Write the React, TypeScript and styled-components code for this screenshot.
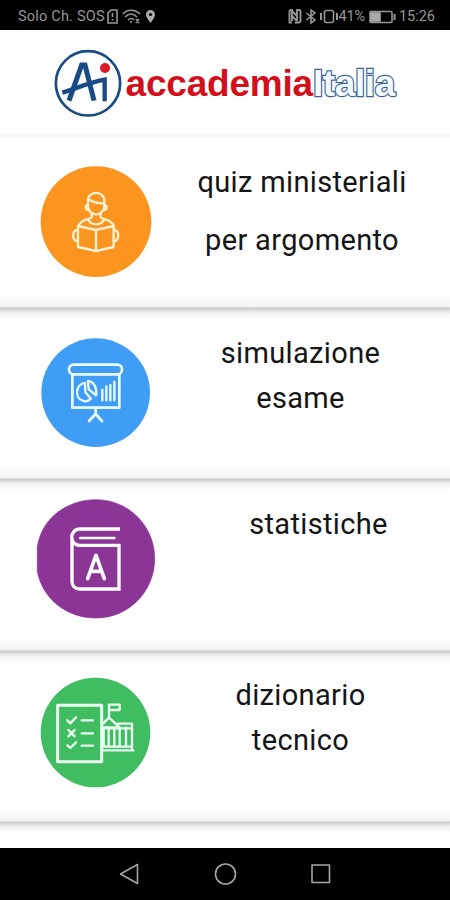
import React from 'react';
import styled, { createGlobalStyle } from 'styled-components';

const Global = createGlobalStyle`
  body { margin: 0; background: #fff; }
  * { box-sizing: border-box; }
`;

const Screen = styled.div`
  width: 450px;
  height: 900px;
  display: flex;
  flex-direction: column;
  overflow: hidden;
  background: #fefefe;
  font-family: Roboto, sans-serif;
  color: #151515;
`;

const StatusBar = styled.div`
  height: 30px;
  flex: none;
  display: flex;
  align-items: center;
  justify-content: space-between;
  padding: 3px 15px 0 18px;
  background: #000;
  color: #969696;
  font-size: 14.5px;
  line-height: 27px;
`;

const StatusGroup = styled.div`
  display: flex;
  align-items: center;
`;

const StatusText = styled.span<{ $spacing?: number; $gap?: number }>`
  letter-spacing: ${(p) => p.$spacing ?? 0}px;
  margin-left: ${(p) => p.$gap ?? 0}px;
  white-space: nowrap;
`;

const StatusIcons = styled.svg`
  display: block;
  fill: none;
  stroke: #969696;
  stroke-width: 1.6;
`;

const Header = styled.header`
  height: 107px;
  flex: none;
  display: flex;
  align-items: flex-start;
  padding: 18px 0 0 53px;
  border-bottom: 3px solid #f7f7f7;
`;

const Emblem = styled.svg`
  display: block;
  width: 70px;
  height: 70px;
  flex: none;
`;

const Wordmark = styled.div`
  margin: 15px 0 0 2.5px;
  font: bold 37px/42px 'Liberation Sans', sans-serif;
  letter-spacing: -0.2px;
  color: #d2101c;
  white-space: nowrap;
`;

const Outlined = styled.span`
  color: #f4fbff;
  letter-spacing: -0.4px;
  -webkit-text-stroke: 2.4px #3b6594;
  paint-order: stroke fill;
`;

const Row = styled.section<{ $height: number; $first?: boolean }>`
  height: ${(p) => p.$height}px;
  flex: none;
  display: flex;
  align-items: flex-start;
  padding-left: 30px;
  background: linear-gradient(
    ${(p) => (p.$first ? '#fefefe 0, #fefefe 3px' : '#cacaca 0, #cfcfcf 1px, #e6e6e6 3px, #f5f5f5 6px')},
    #fefefe 12px,
    #fefefe calc(100% - 14px),
    #f5f5f5 calc(100% - 2px),
    #d8d8d8 100%
  );
`;

const Badge = styled.svg<{ $top: number }>`
  display: block;
  flex: none;
  width: 130px;
  height: 130px;
  margin-top: ${(p) => p.$top}px;
  fill: none;
  stroke-linejoin: round;
  stroke-linecap: round;
`;

const Label = styled.div<{ $top: number; $line: number; $shift: number }>`
  width: 240px;
  margin: ${(p) => p.$top}px 0 0 ${(p) => p.$shift}px;
  font-size: 29px;
  line-height: ${(p) => p.$line}px;
  letter-spacing: 0.35px;
  text-align: center;
  white-space: pre-line;
`;

const Spacer = styled.div`
  flex: 1;
  background: linear-gradient(#cacaca 0, #cfcfcf 1px, #e6e6e6 3px, #f5f5f5 6px, #fefefe 12px);
`;

const NavBar = styled.nav`
  height: 52px;
  flex: none;
  display: flex;
  align-items: center;
  justify-content: space-between;
  padding: 0 118px;
  background: #000;
`;

const NavIcon = styled.svg`
  display: block;
  width: 24px;
  height: 24px;
  fill: none;
  stroke: #a6a6a6;
  stroke-width: 1.6;
  stroke-linejoin: round;
`;

function Reader() {
  return (
    <Badge $top={18} viewBox="0 0 390 390" stroke="#fff1d0" strokeWidth="7">
      <circle cx="198" cy="200" r="166" fill="#fb951f" stroke="none" />
      <path d="M174 153V137C174 106 223 106 223 137V153C223 168 210 178 198 178S174 168 174 153Z" />
      <path d="M174 134C188 137 191 147 222 145M173 150c-8 1-8 15 3 15M224 150c8 1 8 15-3 15" />
      <path d="M185 176v11c-12 9-34 7-39 25M212 176v11c12 9 33 7 39 25M177 197c7 14 36 14 43 0" />
      <path d="M144 213L198 225L251 213V276L198 288L144 276ZM198 225V287" />
      <path d="M143 225c-18 2-18 30 0 34M252 225c17 2 17 30 0 34" />
    </Badge>
  );
}

function Presentation() {
  return (
    <Badge $top={17} viewBox="0 0 390 390" stroke="#eafcff" strokeWidth="8">
      <circle cx="197" cy="203" r="163" fill="#3f9df6" stroke="none" />
      <rect x="117" y="119" width="159" height="29" rx="14" />
      <path d="M127 149V248H268V149M197 250V267L177 288M197 267L216 288" />
      <path d="M165 174C136 176 133 219 158 227C167 231 177 227 183 221L166 202Z" strokeWidth="7" />
      <path d="M174 168C191 169 202 190 198 211L176 193Z" strokeWidth="7" />
      <path d="M217 194V226M229 184V226M241 180V226M253 170V226" strokeWidth="7" />
    </Badge>
  );
}

function Dictionary() {
  return (
    <Badge $top={11} viewBox="0 0 390 390" stroke="#fff" strokeWidth="10">
      <path
        d="M22 170C35 85 110 29 198 29C296 29 374 108 374 206S296 384 198 384C110 384 38 327 22 245Z"
        fill="#8b3597"
        stroke="#8b3597"
        strokeWidth="2"
      />
      <path
        d="M270 117H150C117 117 117 166 150 166H267V297H150C135 297 126 288 126 274V145"
        strokeLinecap="butt"
        strokeLinejoin="miter"
      />
      <path d="M151 144H253" strokeWidth="8" />
      <path d="M173 266L198 196L223 266M182 244H214" strokeWidth="11" />
    </Badge>
  );
}

function Exam() {
  return (
    <Badge $top={14} viewBox="0 0 390 390" stroke="#e9fff0" strokeWidth="7">
      <circle cx="196.500" cy="202.500" r="164.500" fill="#40bd61" stroke="none" />
      <rect x="83" y="121" width="132" height="169" strokeWidth="9" />
      <path d="M112 166L121 175L138 157M155 166H189M115 195L134 214M134 195L115 214M155 205H189M112 241L121 249L138 232M155 242H189" />
      <path d="M237 158V119H269V135H240M219 176L237 158L269 187H219M262 176H306V250M219 256H310" />
      <path d="M221 192V245M236 192V245M253 192V245M269 192V245M288 187V245M222 190H305M222 245H305" />
    </Badge>
  );
}

export default function App() {
  return (
    <Screen>
      <Global />
      <StatusBar>
        <StatusGroup>
          <StatusText $spacing={0.2}>Solo Ch. SOS</StatusText>
          <StatusIcons width="52" height="20" viewBox="0 0 52 20">
            <path d="M3 6L6 3H12V16H3ZM7.500 6V10M7.500 12V13.500" />
            <path d="M18 7C22 2 30 2 35 7M20 10C24 6 28 6 32 10M23 13C25 11 27 11 29 13M26 14V16M31 12L34 16M34 12L31 16" />
            <path d="M45.500 16C42.500 12 41 10 41 7.500A4.500 4.500 0 0 1 50 7.500C50 10 48.500 12 45.500 16Z" fill="#aaa" stroke="none" />
            <circle cx="45.500" cy="7.500" r="1.600" fill="#000" stroke="none" />
          </StatusIcons>
        </StatusGroup>
        <StatusGroup>
          <StatusIcons width="52" height="20" viewBox="0 0 52 20">
            <path d="M5 15.500H2.500V4.500Q2.500 3 5 3V14" strokeWidth="1.900" />
            <path d="M5 4L10 9V14M8 15.500H12Q13.500 15.500 13.500 14V4.500Q13.500 3 12 3H10V8" strokeWidth="1.900" />
            <path d="M5 9L10 14" strokeWidth="1.900" />
            <path d="M19.500 6L28 13L24 16V3L28 6L19.500 13" />
            <rect x="37.500" y="3.500" width="9" height="12" rx="2" />
            <path d="M34 6V13M50 6V13" strokeWidth="2" />
          </StatusIcons>
          <StatusText $spacing={-0.2}>41%</StatusText>
          <StatusIcons width="33" height="20" viewBox="0 0 33 20">
            <rect x="5" y="4.500" width="22" height="11" rx="1" />
            <path d="M6 6H15V14H6Z" fill="#aaa" stroke="#aaa" />
            <path d="M29.500 7V13" strokeWidth="2" />
          </StatusIcons>
          <StatusText $gap={1}>15:26</StatusText>
        </StatusGroup>
      </StatusBar>
      <Header>
        <Emblem viewBox="0 0 210 210" fill="none" stroke="#174b85">
          <circle cx="105" cy="106" r="96.500" strokeWidth="8" />
          <path d="M48 158L86 51H96L123 158" strokeWidth="15" />
          <path d="M28 134C64 124 101 105 155 95V160" strokeWidth="13" />
          <circle cx="156" cy="60" r="15" fill="#dc1925" stroke="none" />
        </Emblem>
        <Wordmark>
          accademia<Outlined>Italia</Outlined>
        </Wordmark>
      </Header>
      <Row $height={171} $first>
        <Reader />
        <Label $top={16} $line={58} $shift={22}>{'quiz ministeriali\nper argomento'}</Label>
      </Row>
      <Row $height={171}>
        <Presentation />
        <Label $top={23} $line={45} $shift={20.5}>{'simulazione\nesame'}</Label>
      </Row>
      <Row $height={172}>
        <Dictionary />
        <Label $top={23} $line={45} $shift={38.5}>statistiche</Label>
      </Row>
      <Row $height={171}>
        <Exam />
        <Label $top={22} $line={45} $shift={20.5}>{'dizionario\ntecnico'}</Label>
      </Row>
      <Spacer />
      <NavBar>
        <NavIcon viewBox="0 0 24 24"><path d="M2.500 12L19.500 2.500V21.500Z" /></NavIcon>
        <NavIcon viewBox="0 0 24 24"><circle cx="12.500" cy="12" r="10" /></NavIcon>
        <NavIcon viewBox="0 0 24 24"><rect x="4" y="3" width="17.500" height="17.500" /></NavIcon>
      </NavBar>
    </Screen>
  );
}
